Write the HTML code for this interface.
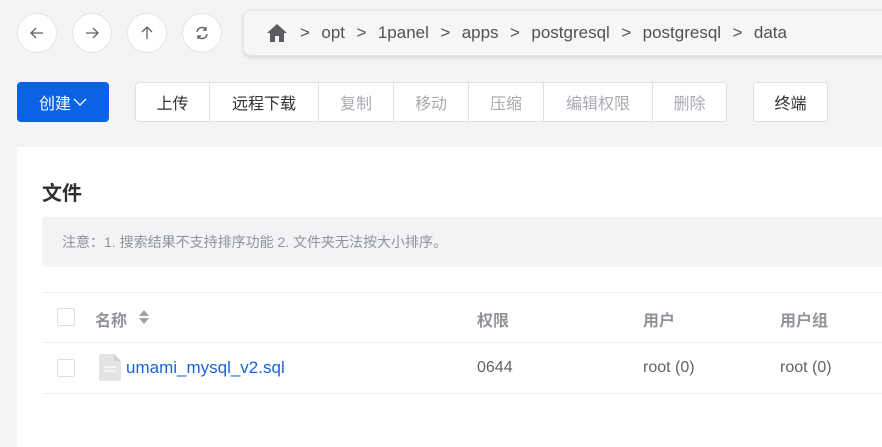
<!DOCTYPE html>
<html><head><meta charset="utf-8"><style>
*{margin:0;padding:0;box-sizing:border-box}
body{width:882px;height:427px;overflow:hidden;background:#f4f4f5;font-family:"Liberation Sans","Noto Sans CJK SC",sans-serif;position:relative;color:#303133}
.c{position:absolute;width:40px;height:40px;border-radius:50%;background:#fff;border:1px solid #e4e4e7;top:13px;display:flex;align-items:center;justify-content:center;color:#606266}
.bc{position:absolute;left:243px;top:10px;width:660px;height:46px;background:#f6f6f6;border:1px solid #e6e6e6;border-radius:8px;box-shadow:0 2px 4px rgba(0,0,0,.12);font-size:17px;word-spacing:1px;color:#505257;display:flex;align-items:center;padding-left:22px;white-space:pre}
.btn{position:absolute;top:82px;height:40px;background:#fff;border:1px solid #dcdfe6;font-size:16px;display:flex;align-items:center;justify-content:center;color:#303133}
.dis{color:#a8abb2}
.card{position:absolute;left:17px;top:147px;width:880px;height:300px;background:#fff}
.ab{position:absolute}
.cb{position:absolute;width:18px;height:18px;border:1px solid #dcdfe6;border-radius:2px;background:#fff}
.line{position:absolute;left:42px;width:840px;height:1px;background:#ebeef5}
.th{position:absolute;font-size:16px;font-weight:bold;color:#909399}
.td{position:absolute;font-size:16px;color:#606266}
</style></head><body>
<div class="c" style="left:17px"><svg width="16" height="16" viewBox="0 0 16 16" fill="none" stroke="#606266" stroke-width="1.3"><path d="M14 8H2M7 3L2 8l5 5"/></svg></div>
<div class="c" style="left:72px"><svg width="16" height="16" viewBox="0 0 16 16" fill="none" stroke="#606266" stroke-width="1.3"><path d="M2 8h12M9 3l5 5-5 5"/></svg></div>
<div class="c" style="left:127px"><svg width="16" height="16" viewBox="0 0 16 16" fill="none" stroke="#606266" stroke-width="1.3"><path d="M8 14V2M3 7l5-5 5 5"/></svg></div>
<div class="c" style="left:182px"><svg width="16" height="16" viewBox="0 0 16 16" fill="none" stroke="#606266" stroke-width="1.4"><path d="M3 7a5 5 0 0 1 9-2.5M13 9a5 5 0 0 1-9 2.5M12 2v3H9M4 14v-3h3"/></svg></div>
<div class="bc"><svg width="22" height="20" viewBox="0 0 22 20" style="margin-right:12px"><path d="M11 1L1 10h3v9h5v-6h4v6h5v-9h3z" fill="#5a5c63"/></svg>&gt;  opt  &gt;  1panel  &gt;  apps  &gt;  postgresql  &gt;  postgresql  &gt;  data</div>
<div class="btn" style="left:17px;width:92px;background:#0b62e5;border-color:#0b62e5;color:#fff;border-radius:4px">创建<svg width="14" height="10" viewBox="0 0 14 10" style="margin-left:2px"><path d="M1 2l6 6 6-6" fill="none" stroke="#fff" stroke-width="1.3"/></svg></div>
<div class="btn" style="left:135px;width:75px;border-radius:4px 0 0 4px">上传</div>
<div class="btn" style="left:209px;width:110px">远程下载</div>
<div class="btn dis" style="left:318px;width:76px">复制</div>
<div class="btn dis" style="left:393px;width:76px">移动</div>
<div class="btn dis" style="left:468px;width:76px">压缩</div>
<div class="btn dis" style="left:543px;width:110px">编辑权限</div>
<div class="btn dis" style="left:652px;width:75px;border-radius:0 4px 4px 0">删除</div>
<div class="btn" style="left:753px;width:75px;border-radius:4px">终端</div>
<div class="card"></div>
<div class="ab" style="left:42px;top:177px;font-size:20px;font-weight:bold;color:#303133">文件</div>
<div class="ab" style="left:42px;top:217px;width:850px;height:50px;background:#f2f3f5;border-radius:4px;font-size:14px;color:#909399;line-height:50px;padding-left:20px">注意：1. 搜索结果不支持排序功能 2. 文件夹无法按大小排序。</div>
<div class="line" style="top:292px"></div>
<div class="line" style="top:342px"></div>
<div class="line" style="top:393px"></div>
<div class="cb" style="left:57px;top:308px"></div>
<div class="cb" style="left:57px;top:359px"></div>
<div class="th" style="left:95px;top:307px">名称</div>
<svg class="ab" style="left:137px;top:309px" width="14" height="16" viewBox="0 0 14 16"><path d="M7 1l5 6H2zM7 15l5-6H2z" fill="#a0a2a8"/></svg>
<div class="th" style="left:477px;top:307px">权限</div>
<div class="th" style="left:643px;top:307px">用户</div>
<div class="th" style="left:780px;top:307px">用户组</div>
<svg class="ab" style="left:99px;top:354px" width="22" height="27" viewBox="0 0 22 27"><path d="M2 0h13l7 7v18a2 2 0 0 1-2 2H2a2 2 0 0 1-2-2V2a2 2 0 0 1 2-2z" fill="#e3e3e3"/><path d="M15 0v7h7z" fill="#cfcfcf"/><path d="M5 13h12M5 17h12" stroke="#fff" stroke-width="1.3"/></svg>
<div class="td" style="left:126px;top:358px;color:#1863d6;font-size:17px">umami_mysql_v2.sql</div>
<div class="td" style="left:477px;top:359px">0644</div>
<div class="td" style="left:643px;top:359px">root (0)</div>
<div class="td" style="left:780px;top:359px">root (0)</div>
</body></html>
